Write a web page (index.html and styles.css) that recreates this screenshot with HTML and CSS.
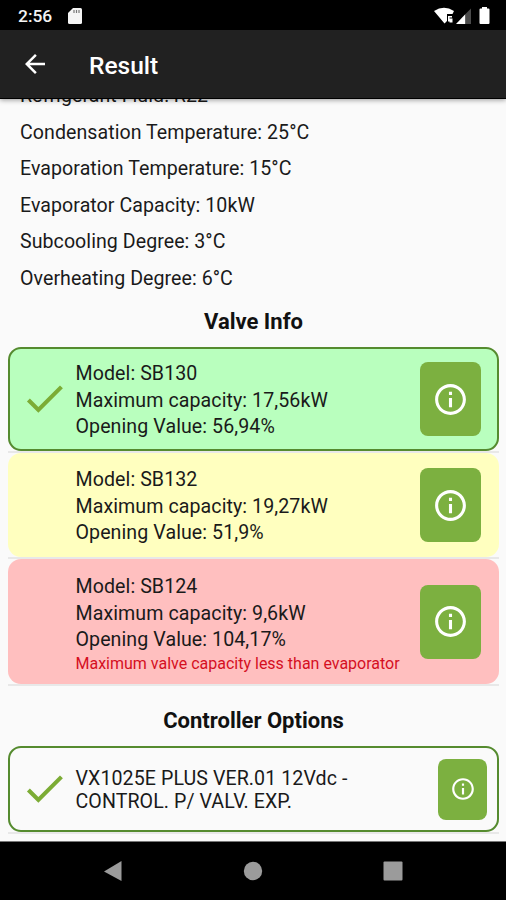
FILE: index.html
```html
<!DOCTYPE html>
<html lang="en">
<head>
<meta charset="utf-8">
<title>Result</title>
<link rel="stylesheet" href="styles.css">
</head>
<body>
<svg class="defs" aria-hidden="true">
  <symbol id="check" viewBox="0 0 24 24"><path d="M9 16.17L4.83 12l-1.42 1.41L9 19 21 7l-1.41-1.41z"/></symbol>
  <symbol id="info" viewBox="0 0 24 24"><path d="M11 17h2v-6h-2v6zm1-15C6.48 2 2 6.48 2 12s4.48 10 10 10 10-4.48 10-10S17.52 2 12 2zm0 18c-4.41 0-8-3.59-8-8s3.59-8 8-8 8 3.59 8 8-3.59 8-8 8zM11 9h2V7h-2v2z"/></symbol>
</svg>
<div class="screen">
  <div class="statusbar">
    <span class="clock">2:56</span>
    <svg class="sd" viewBox="0 0 14 16"><path fill="#f4f4f4" d="M5 0h7.500q1.500 0 1.500 1.500v13q0 1.500-1.500 1.500h-11q-1.500 0-1.500-1.500v-9.500z"/><path stroke="#777" stroke-width="1.200" d="M6 2v3M8.500 2v3M11 2v3"/></svg>
    <svg class="signals" viewBox="0 0 58 18">
      <path fill="#fff" d="M0 4Q10-2.500 20 4L18.500 7H13v7l-2.500 2.500z"/>
      <path fill="#fff" d="M14 9h4v1.500h-2.500v4H14zM15.500 11.500h3v4h-3z"/>
      <path fill="#fff" d="M22 17L31.500 7v10z"/><path fill="#4a4a4a" d="M31.500 7L37 1.500V17h-5.500z"/>
      <path fill="#fff" d="M48 1.500V0h5v1.500h1.500q1 0 1 1V16q0 1-1 1h-8q-1 0-1-1V2.500q0-1 1-1z"/>
    </svg>
  </div>
  <header class="appbar">
    <svg class="back" viewBox="0 0 24 24"><path d="M20 11H7.830l5.590-5.590L12 4l-8 8 8 8 1.410-1.410L7.830 13H20v-2z"/></svg>
    <h1>Result</h1>
  </header>
  <main class="content">
    <div class="params">
      <p>Refrigerant Fluid: R22</p>
      <p>Condensation Temperature: 25°C</p>
      <p>Evaporation Temperature: 15°C</p>
      <p>Evaporator Capacity: 10kW</p>
      <p>Subcooling Degree: 3°C</p>
      <p>Overheating Degree: 6°C</p>
    </div>
    <h2>Valve Info</h2>
    <section class="list">
      <div class="row">
        <article class="card ok">
          <svg class="mark"><use href="#check"/></svg>
          <div class="text"><p>Model: SB130</p><p>Maximum capacity: 17,56kW</p><p>Opening Value: 56,94%</p></div>
          <button class="info"><svg><use href="#info"/></svg></button>
        </article>
      </div>
      <div class="row">
        <article class="card warn">
          <div class="mark"></div>
          <div class="text"><p>Model: SB132</p><p>Maximum capacity: 19,27kW</p><p>Opening Value: 51,9%</p></div>
          <button class="info"><svg><use href="#info"/></svg></button>
        </article>
      </div>
      <div class="row">
        <article class="card bad">
          <div class="mark"></div>
          <div class="text"><p>Model: SB124</p><p>Maximum capacity: 9,6kW</p><p>Opening Value: 104,17%</p><p class="error">Maximum valve capacity less than evaporator</p></div>
          <button class="info"><svg><use href="#info"/></svg></button>
        </article>
      </div>
    </section>
    <h2 class="second">Controller Options</h2>
    <section class="list">
      <div class="row">
        <article class="card controller">
          <svg class="mark"><use href="#check"/></svg>
          <div class="text"><p>VX1025E PLUS VER.01 12Vdc -</p><p>CONTROL. P/ VALV. EXP.</p></div>
          <button class="info small"><svg><use href="#info"/></svg></button>
        </article>
      </div>
    </section>
  </main>
  <nav class="navbar">
    <svg viewBox="0 0 20 20"><path d="M18.500 0v20L1 10.500z"/></svg>
    <svg viewBox="0 0 20 20"><circle cx="10" cy="10" r="9.200"/></svg>
    <svg viewBox="0 0 20 20"><rect x=".5" y=".5" width="19" height="19" rx="1"/></svg>
  </nav>
</div>
</body>
</html>
```
FILE: styles.css
```css
* { box-sizing: border-box; margin: 0; padding: 0; }
body { background: #000; font-family: Roboto, "Liberation Sans", sans-serif; color: #1a1a1a; }
svg { display: block; }
.defs { display: none; }
.screen { width: 506px; height: 900px; display: flex; flex-direction: column; overflow: hidden; }

.statusbar { height: 30px; flex: none; background: #000; display: flex; align-items: center; padding: 1px 14px 0 18px; }
.clock { color: #f4f4f4; font-size: 17.4px; font-weight: 500; line-height: 29px; padding-top: 1px; width: 50px; }
.sd { width: 14px; height: 16px; }
.signals { width: 58px; height: 18px; margin-left: auto; }

.appbar { height: 69px; flex: none; background: #212121; border-bottom: 1px solid #000; display: flex; align-items: center; padding-left: 20px; box-shadow: 0 1px 5px rgba(0, 0, 0, .4); z-index: 1; }
.back { width: 30px; height: 30px; fill: #fff; }
.appbar h1 { margin-left: 39px; margin-top: 3px; color: #fff; font-size: 24.5px; font-weight: 500; }

.content { flex: 1; min-height: 0; background: #fafafa; overflow: hidden; border-bottom: 1px solid #777; }
.params { margin-top: -21px; padding-left: 20px; font-size: 19.6px; letter-spacing: .05px; line-height: 36.6px; }
h2 { font-size: 22px; font-weight: 700; line-height: 28px; text-align: center; color: #111; margin-top: 10px; margin-bottom: 11px; padding-left: 1px; }
.second { margin-top: 21px; }

.list { padding: 0 7px 0 8px; }
.row { border-bottom: 2px solid #e8e8e8; }
.card { height: 104px; border-radius: 13px; display: flex; align-items: center; padding: 0 18px 0 12px; }
.ok { background: #b9ffbe; border: 2px solid #558b2f; padding: 0 16px 0 10px; }
.warn { background: #ffffbf; }
.bad { background: #ffbfbf; height: 125px; }
.controller { height: 86px; border: 2px solid #558b2f; padding: 0 10px; }
.mark { width: 49px; height: 49px; flex: none; fill: #7cac35; }
.text { margin-left: 6.500px; padding-top: 5px; flex: 1; font-size: 19.6px; letter-spacing: .08px; line-height: 26.7px; white-space: nowrap; }
.text .error { font-size: 16px; letter-spacing: 0; line-height: 19px; color: #d50f1f; }
.controller .text { padding-top: 3px; line-height: 23px; }
.info { width: 61px; height: 74px; margin-top: 1px; border: 0; border-radius: 8px; background: #7cb040; display: flex; align-items: center; justify-content: center; flex: none; }
.info svg { width: 37px; height: 37px; fill: #fff; }
.small { width: 49px; height: 61px; }
.small svg { width: 26px; height: 26px; }

.navbar { height: 58px; flex: none; background: #000; display: flex; justify-content: center; gap: 120px; align-items: center; }
.navbar svg { width: 20px; height: 20px; fill: #9b9b9b; }
```
